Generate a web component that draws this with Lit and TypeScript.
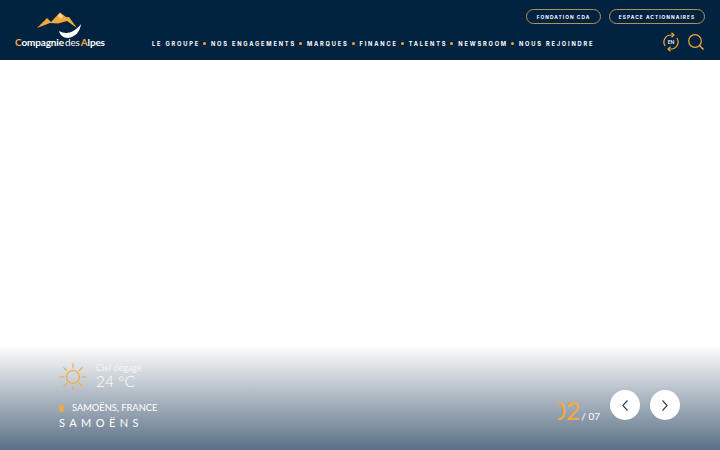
import { LitElement, html, css, svg } from "lit";
import { customElement } from "lit/decorators.js";

const NAV = ["LE GROUPE", "NOS ENGAGEMENTS", "MARQUES", "FINANCE", "TALENTS", "NEWSROOM", "NOUS REJOINDRE"];

@customElement("app-root")
export class AppRoot extends LitElement {
  static styles = css`
    :host { display: block; width: 720px; height: 450px; overflow: hidden; font-family: Lato, "Open Sans", sans-serif; background: #fff; }
    .page { height: 450px; display: flex; flex-direction: column; }
    header { height: 60px; flex: none; background: #012340; display: flex; box-sizing: border-box; padding: 0 15px; }
    .logo { width: 137px; flex: none; display: flex; flex-direction: column; align-items: flex-start; padding-top: 12px; box-sizing: border-box; }
    .logo svg { display: block; margin-left: 21px; }
    .brand { color: #fff; font-size: 10px; line-height: 10px; font-weight: 700; margin-top: -3px; white-space: nowrap; letter-spacing: -0.14px; }
    .brand .o { color: #f2a93b; }
    .brand .l { font-weight: 400; margin: 0 1px; }
    .right { flex: 1; display: flex; flex-direction: column; }
    .top { height: 32px; display: flex; justify-content: flex-end; align-items: flex-start; gap: 8px; padding-top: 9px; box-sizing: border-box; }
    .pill { height: 15px; box-sizing: border-box; border: 1px solid #b39257; border-radius: 8px; color: #fff; font-family: Inter, sans-serif; font-size: 4.8px; font-weight: 700; letter-spacing: 1.05px; display: flex; align-items: center; justify-content: center; white-space: nowrap; }
    .p1 { width: 75px; }
    .p2 { width: 96px; }
    .bottom { display: flex; align-items: center; height: 23px; }
    nav { display: flex; align-items: center; flex: 1; }
    nav a { color: #fff; font-family: Inter, sans-serif; font-size: 5.7px; font-weight: 700; letter-spacing: 1.8px; white-space: nowrap; }
    .dot { width: 3px; height: 3px; border-radius: 50%; background: #f2a93b; margin: 0 5px 0 3px; flex: none; }
    .icons { display: flex; align-items: center; gap: 8px; padding-right: 1px; margin-top: -3px; }
    .icons svg { display: block; }
    .hero { flex: 1; display: flex; flex-direction: column; justify-content: flex-end; }
    .band { height: 105px; flex: none; box-sizing: border-box; background: linear-gradient(to bottom, #ffffff 0%, #5b7086 100%); display: flex; justify-content: space-between; align-items: flex-end; padding: 0 40px 20px 59px; }
    .info { display: flex; flex-direction: column; }
    .weather { display: flex; align-items: center; gap: 9px; }
    .wtext { display: flex; flex-direction: column; color: #fff; margin-top: -2px; }
    .cond { font-size: 9px; line-height: 10px; font-weight: 400; color: #f4f5f6; }
    .temp { font-size: 15.5px; line-height: 17px; font-weight: 300; }
    .place { display: flex; align-items: center; margin-top: 11px; color: #fff; font-size: 9.3px; line-height: 12px; font-weight: 400; }
    .pin { width: 5px; height: 7px; border-radius: 50%; background: #f2a93b; margin-right: 8px; }
    .name { color: #fff; font-size: 11px; line-height: 14px; letter-spacing: 4.4px; margin-top: 2px; font-weight: 400; }
    .ctrl { display: flex; align-items: center; margin-bottom: 8px; }
    .count { display: flex; align-items: baseline; margin-right: 10px; padding-top: 10px; }
    .cur { width: 22px; overflow: hidden; display: flex; justify-content: flex-end; color: #f2a93b; font-size: 25px; line-height: 24px; font-weight: 400; white-space: nowrap; }
    .tot { color: #fff; font-size: 10px; margin-left: 1px; white-space: nowrap; }
    .btn { width: 30px; height: 30px; border-radius: 50%; background: #fff; display: flex; align-items: center; justify-content: center; }
    .btn + .btn { margin-left: 10px; }
  `;

  render() {
    const rays = [0, 45, 90, 135, 180, 225, 270, 315];
    return html`<div class="page">
      <header>
        <div class="logo">
          <svg width="48" height="28" viewBox="0 0 48 28">
            <path d="M1 16 L11 6 L15 10 L24 0.5 L30 5 L33 5 L41 16 L31 9 L22 11.5 L14 11 Z" fill="#f2a93b"/>
            <path d="M23.5 1 L27 4 L25 7 L22 4 Z" fill="#fbd9a0"/>
            <path d="M23 19 C30 23 38 21 45 12 C44 20 39 25 32 26 C27 26 24 23 23 19 Z" fill="#fff"/>
          </svg>
          <div class="brand"><span class="o">C</span>ompagnie<span class="l">des</span><span class="o">A</span>lpes</div>
        </div>
        <div class="right">
          <div class="top">
            <div class="pill p1">FONDATION CDA</div>
            <div class="pill p2">ESPACE ACTIONNAIRES</div>
          </div>
          <div class="bottom">
            <nav>
              ${NAV.map((n, i) => html`${i ? html`<span class="dot"></span>` : ""}<a>${n}</a>`)}
            </nav>
            <div class="icons">
              <svg width="18" height="20" viewBox="0 0 18 20" fill="none" stroke="#f2a93b" stroke-width="1.2">
                <path d="M3.2 14 A7 7 0 0 1 9 3 L12 3"/>
                <path d="M14.8 6 A7 7 0 0 1 9 17 L6 17"/>
                <path d="M9.5 0.8 L12 3 L9.5 5.2" />
                <path d="M8.5 14.8 L6 17 L8.5 19.2" />
                <text x="9" y="12" text-anchor="middle" font-size="5" font-weight="700" fill="#fff" stroke="none" font-family="Lato, sans-serif">EN</text>
              </svg>
              <svg width="16" height="16" viewBox="0 0 16 16" fill="none" stroke="#f2a93b" stroke-width="1.2">
                <circle cx="7" cy="7" r="6.3"/>
                <path d="M11.5 11.5 L15.5 15.5" stroke-width="1.5"/>
              </svg>
            </div>
          </div>
        </div>
      </header>
      <div class="hero">
        <div class="band">
          <div class="info">
            <div class="weather">
              <svg width="28" height="28" viewBox="0 0 28 28" fill="none" stroke="#f2a93b">
                <circle cx="14" cy="14" r="6.5" stroke-width="1.2"/>
                ${rays.map((r) => svg`<path d="M14 0.5 L14 5.5" stroke-width="1.1" transform="rotate(${r} 14 14)"/>`)}
              </svg>
              <div class="wtext"><span class="cond">Ciel dégagé</span><span class="temp">24 °C</span></div>
            </div>
            <div class="place"><span class="pin"></span>SAMOËNS, FRANCE</div>
            <div class="name">SAMOËNS</div>
          </div>
          <div class="ctrl">
            <div class="count"><div class="cur">02</div><span class="tot">/ 07</span></div>
            <div class="btn"><svg width="6" height="11" viewBox="0 0 6 11" fill="none" stroke="#2e3b4a" stroke-width="1.1"><path d="M5.5 0.5 L0.8 5.5 L5.5 10.5"/></svg></div>
            <div class="btn"><svg width="6" height="11" viewBox="0 0 6 11" fill="none" stroke="#2e3b4a" stroke-width="1.1"><path d="M0.5 0.5 L5.2 5.5 L0.5 10.5"/></svg></div>
          </div>
        </div>
      </div>
    </div>`;
  }
}
